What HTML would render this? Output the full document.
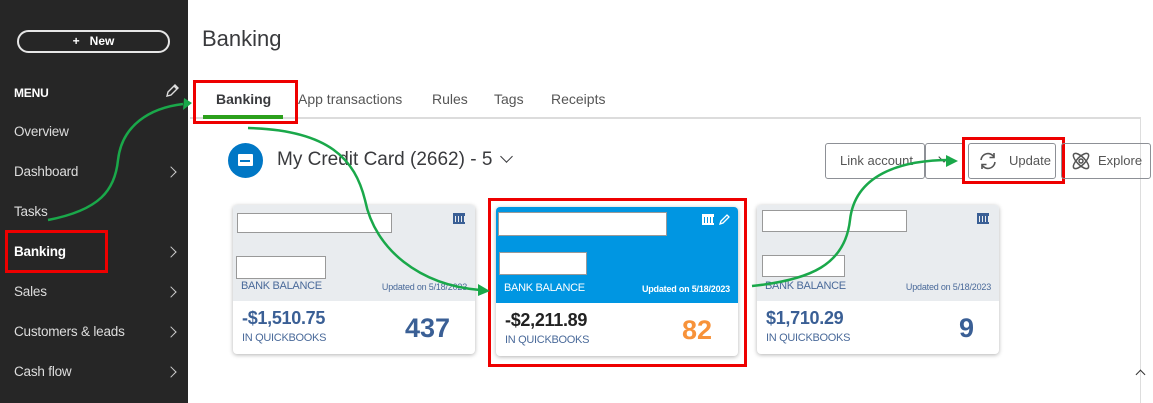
<!DOCTYPE html><html><head><style>
*{margin:0;padding:0;box-sizing:border-box}
body{width:1153px;height:403px;overflow:hidden;background:#fff;font-family:"Liberation Sans",sans-serif;position:relative}
.sb{position:absolute;left:0;top:0;width:188px;height:403px;background:#262626;color:#e8e8e8}
.new{position:absolute;left:17px;top:30px;width:153px;height:23px;border:2px solid #e6e6e6;border-radius:12px;text-align:center;font-size:12px;font-weight:bold;line-height:19px;color:#fff}
.mi{position:absolute;left:14px;font-size:13.5px;color:#ddd;letter-spacing:-0.2px}
.ch{position:absolute;left:167px;width:8px;height:8px;border-right:1.6px solid #ccc;border-top:1.6px solid #ccc;transform:rotate(45deg)}
.a{position:absolute}
.red{position:absolute;border:3px solid #e00}
.card{position:absolute;width:242px;height:149px;border-radius:4px;box-shadow:0 1px 4px rgba(0,0,0,.3);background:#fff;overflow:hidden}
.top{height:96px;background:#e9ecef;position:relative}
.wb{position:absolute;background:#fff;border:1px solid #999}
.bb{position:absolute;left:8px;top:75px;font-size:11px;color:#4a6a9a;letter-spacing:-0.3px}
.up{position:absolute;right:8px;top:77px;font-size:9px;color:#4a6a9a;letter-spacing:-0.2px}
.amt{position:absolute;left:9px;top:103px;font-size:18px;font-weight:bold;color:#3a5f95;letter-spacing:-0.3px}
.iq{position:absolute;left:9px;top:127px;font-size:11px;color:#4a6a9a;letter-spacing:-0.3px}
.num{position:absolute;top:108px;font-size:27px;font-weight:bold;color:#3a5f95}
.btn{position:absolute;top:143px;height:36px;border:1px solid #8d9096;border-radius:3px;font-size:13px;color:#555;line-height:34px}
</style></head><body>
<div class="sb">
<div class="new">+&nbsp;&nbsp; New</div>
<div class="mi" style="top:86px;font-weight:bold;font-size:12px;color:#fff">MENU</div>
<svg class="a" style="left:164px;top:83px" width="16" height="16" viewBox="0 0 16 16"><path d="M3 13 L4 9 L11 2 L14 5 L7 12 Z M10 3 L13 6" fill="none" stroke="#ddd" stroke-width="1.4"/></svg>
<div class="mi" style="top:124px">Overview</div>
<div class="mi" style="top:164px">Dashboard</div><div class="ch" style="top:168px"></div>
<div class="mi" style="top:204px">Tasks</div>
<div class="mi" style="top:244px;font-weight:bold;color:#fff">Banking</div><div class="ch" style="top:248px"></div>
<div class="mi" style="top:284px">Sales</div><div class="ch" style="top:288px"></div>
<div class="mi" style="top:324px">Customers &amp; leads</div><div class="ch" style="top:328px"></div>
<div class="mi" style="top:364px">Cash flow</div><div class="ch" style="top:368px"></div>
</div>
<div class="red" style="left:5px;top:230px;width:103px;height:43px"></div>
<div class="a" style="left:202px;top:26px;font-size:22px;color:#393a3d">Banking</div>
<div class="a" style="left:190px;top:117px;width:951px;height:2px;background:#dcdcdc"></div>
<div class="a" style="left:1140px;top:117px;width:1px;height:286px;background:#ddd"></div>
<div class="a" style="left:216px;top:91px;font-size:14px;font-weight:bold;color:#393a3d">Banking</div>
<div class="a" style="left:203px;top:115px;width:80px;height:4px;background:#2ca01c"></div>
<div class="red" style="left:193px;top:80px;width:105px;height:44px"></div>
<div class="a" style="left:298px;top:91px;font-size:14px;color:#555">App transactions</div>
<div class="a" style="left:432px;top:91px;font-size:14px;color:#555">Rules</div>
<div class="a" style="left:494px;top:91px;font-size:14px;color:#555">Tags</div>
<div class="a" style="left:551px;top:91px;font-size:14px;color:#555">Receipts</div>
<div class="a" style="left:228px;top:143px;width:35px;height:35px;border-radius:50%;background:#0077c5"></div>
<div class="a" style="left:238px;top:154px;width:15px;height:12px;background:#fff;border-radius:1px"></div>
<div class="a" style="left:240px;top:160px;width:10px;height:2px;background:#0077c5"></div>
<div class="a" style="left:277px;top:149px;font-size:19px;color:#393a3d">My Credit Card (2662) - 5</div>
<div class="a" style="left:502px;top:152px;width:9px;height:9px;border-right:1.8px solid #393a3d;border-bottom:1.8px solid #393a3d;transform:rotate(45deg)"></div>
<div class="btn" style="left:825px;width:100px;padding-left:14px">Link account</div>
<div class="btn" style="left:925px;width:40px;border-left:1px solid #8d9096"></div>
<div class="a" style="left:940px;top:153px;width:8px;height:8px;border-right:1.6px solid #444;border-bottom:1.6px solid #444;transform:rotate(45deg)"></div>
<div class="btn" style="left:968px;width:88px;padding-left:40px">Update</div>
<svg class="a" style="left:977px;top:150px" width="22" height="22" viewBox="0 0 22 22"><path d="M4 10 A7 7 0 0 1 17 7 M18 12 A7 7 0 0 1 5 15" fill="none" stroke="#555" stroke-width="1.6"/><path d="M17 3 V7.5 H12.5 M5 19 V14.5 H9.5" fill="none" stroke="#555" stroke-width="1.6"/></svg>
<div class="red" style="left:962px;top:137px;width:103px;height:47px"></div>
<div class="btn" style="left:1061px;width:90px;padding-left:36px">Explore</div>
<svg class="a" style="left:1069px;top:149px" width="24" height="24" viewBox="0 0 24 24" fill="none" stroke="#555" stroke-width="1.5"><ellipse cx="12" cy="12" rx="10" ry="4" transform="rotate(45 12 12)"/><ellipse cx="12" cy="12" rx="10" ry="4" transform="rotate(-45 12 12)"/><circle cx="12" cy="12" r="2"/></svg>

<div class="card" style="left:233px;top:205px"><div class="top">
<div class="wb" style="left:4px;top:8px;width:155px;height:20px"></div>
<div class="wb" style="left:3px;top:51px;width:90px;height:23px"></div>
<div class="bb">BANK BALANCE</div><div class="up">Updated on 5/18/2023</div>
<div class="a" style="right:10px;top:8px;width:12px;height:11px;border-top:3px solid #3a5f95;border-bottom:2px solid #3a5f95;background:repeating-linear-gradient(90deg,#3a5f95 0 2px,transparent 2px 3px)"></div></div>
<div class="amt">-$1,510.75</div><div class="iq">IN QUICKBOOKS</div><div class="num" style="left:172px">437</div></div>

<div class="card" style="left:496px;top:207px"><div class="top" style="background:#0096e2">
<div class="wb" style="left:2px;top:5px;width:169px;height:24px"></div>
<div class="wb" style="left:3px;top:45px;width:88px;height:23px"></div>
<div class="bb" style="color:#fff">BANK BALANCE</div><div class="up" style="color:#fff;font-weight:bold">Updated on 5/18/2023</div>
<div class="a" style="left:206px;top:7px;width:12px;height:11px;border-top:3px solid #fff;border-bottom:2px solid #fff;background:repeating-linear-gradient(90deg,#fff 0 2px,transparent 2px 3px)"></div>
<svg class="a" style="left:222px;top:6px" width="12" height="13" viewBox="0 0 12 13"><path d="M2 11 L3 8 L9 2 L11 4 L5 10 Z" fill="none" stroke="#fff" stroke-width="1.3"/></svg></div>
<div class="amt" style="color:#222">-$2,211.89</div><div class="iq">IN QUICKBOOKS</div><div class="num" style="left:186px;color:#f7923a">82</div></div>
<div class="red" style="left:488px;top:198px;width:259px;height:169px"></div>

<div class="card" style="left:757px;top:205px"><div class="top">
<div class="wb" style="left:5px;top:5px;width:145px;height:22px"></div>
<div class="wb" style="left:5px;top:50px;width:83px;height:22px"></div>
<div class="bb">BANK BALANCE</div><div class="up">Updated on 5/18/2023</div>
<div class="a" style="right:10px;top:8px;width:12px;height:11px;border-top:3px solid #3a5f95;border-bottom:2px solid #3a5f95;background:repeating-linear-gradient(90deg,#3a5f95 0 2px,transparent 2px 3px)"></div></div>
<div class="amt">$1,710.29</div><div class="iq">IN QUICKBOOKS</div><div class="num" style="left:202px">9</div></div>

<div class="a" style="left:1137px;top:371px;width:7px;height:7px;border-left:1.5px solid #333;border-top:1.5px solid #333;transform:rotate(45deg)"></div>

<svg class="a" style="left:0;top:0" width="1153" height="403" fill="none" stroke="#1aa84a" stroke-width="2.5">
<path d="M48 220 C100 210 115 190 118 160 C122 125 150 108 183 104"/>
<path d="M184 98 L192 103 L183 110 Z" fill="#1aa84a" stroke="none"/>
<path d="M248 128 C330 130 355 160 365 200 C375 250 420 285 480 290"/>
<path d="M478 284 L490 291 L478 296 Z" fill="#1aa84a" stroke="none"/>
<path d="M752 286 C810 280 845 265 850 220 C855 175 900 160 950 160"/>
<path d="M946 155 L958 161 L946 167 Z" fill="#1aa84a" stroke="none"/>
</svg>
</body></html>
